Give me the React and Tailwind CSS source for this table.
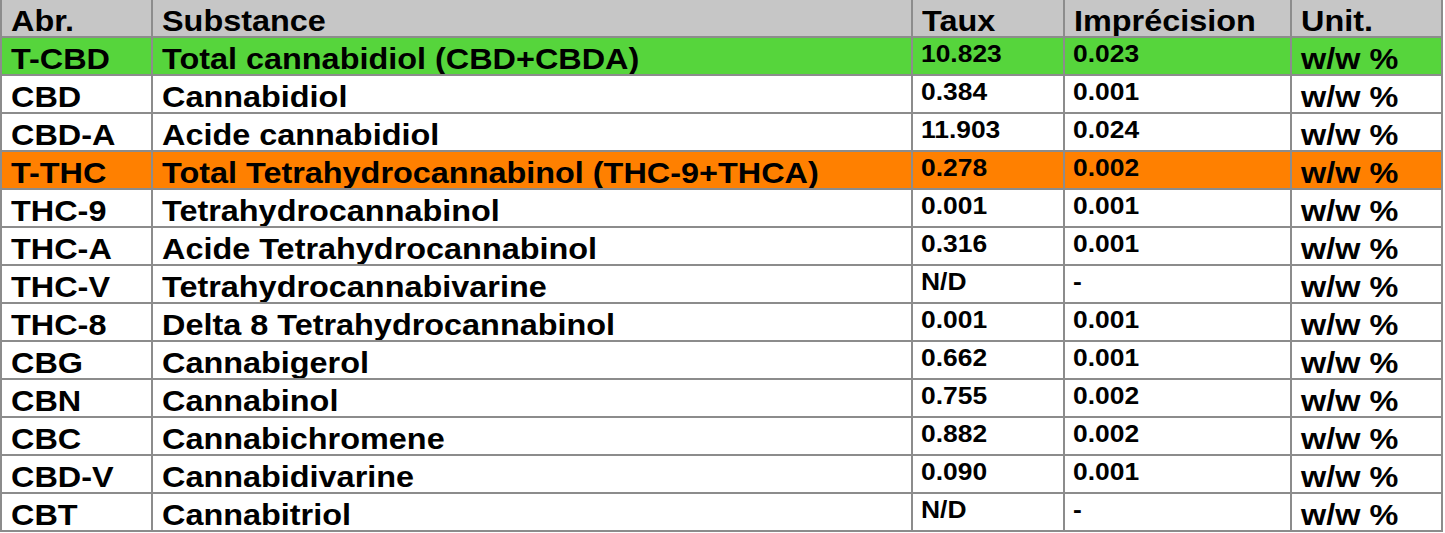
import React from "react";

const rows = [
  { abr: "T-CBD", name: "Total cannabidiol (CBD+CBDA)", taux: "10.823", imp: "0.023", tone: "green" },
  { abr: "CBD", name: "Cannabidiol", taux: "0.384", imp: "0.001" },
  { abr: "CBD-A", name: "Acide cannabidiol", taux: "11.903", imp: "0.024" },
  { abr: "T-THC", name: "Total Tetrahydrocannabinol (THC-9+THCA)", taux: "0.278", imp: "0.002", tone: "orange" },
  { abr: "THC-9", name: "Tetrahydrocannabinol", taux: "0.001", imp: "0.001" },
  { abr: "THC-A", name: "Acide Tetrahydrocannabinol", taux: "0.316", imp: "0.001" },
  { abr: "THC-V", name: "Tetrahydrocannabivarine", taux: "N/D", imp: "-" },
  { abr: "THC-8", name: "Delta 8 Tetrahydrocannabinol", taux: "0.001", imp: "0.001" },
  { abr: "CBG", name: "Cannabigerol", taux: "0.662", imp: "0.001" },
  { abr: "CBN", name: "Cannabinol", taux: "0.755", imp: "0.002" },
  { abr: "CBC", name: "Cannabichromene", taux: "0.882", imp: "0.002" },
  { abr: "CBD-V", name: "Cannabidivarine", taux: "0.090", imp: "0.001" },
  { abr: "CBT", name: "Cannabitriol", taux: "N/D", imp: "-" },
];

const rowBg = {
  header: "bg-[#c6c6c6]",
  green: "bg-[#56d53c]",
  orange: "bg-[#ff8000]",
};

// big text cell (abr, substance, unit, header)
function Big({ children, last }) {
  return (
    <div className={"pl-[9px] pt-[6px] overflow-hidden whitespace-nowrap " + (last ? "" : "border-r-2 border-[#8c8c8c]")}>
      <span className="inline-block origin-left scale-x-[1.08] text-[30px] leading-none">{children}</span>
    </div>
  );
}

// smaller number cell, sits higher in the row
function Num({ children }) {
  return (
    <div className="pl-[8px] pt-[4px] overflow-hidden whitespace-nowrap border-r-2 border-[#8c8c8c]">
      <span className="inline-block origin-left scale-x-110 text-[24px] leading-none">{children}</span>
    </div>
  );
}

function Row({ tone, children }) {
  return (
    <div
      className={
        "grid grid-cols-[151px_760px_152px_227px_1fr] h-[38px] border-b-2 border-[#8c8c8c] " +
        (rowBg[tone] || "bg-white")
      }
    >
      {children}
    </div>
  );
}

export default function App() {
  return (
    <div className="w-[1445px] h-[533px] bg-white text-black font-bold font-['Liberation_Sans',Arial,sans-serif]">
      <div className="w-[1443px] border-l-2 border-r-2 border-t-0 border-[#8c8c8c]">
        <Row tone="header">
          <Big>Abr.</Big>
          <Big>Substance</Big>
          <Big>Taux</Big>
          <Big>Imprécision</Big>
          <Big last>Unit.</Big>
        </Row>
        {rows.map((r) => (
          <Row key={r.abr} tone={r.tone}>
            <Big>{r.abr}</Big>
            <Big>{r.name}</Big>
            <Num>{r.taux}</Num>
            <Num>{r.imp}</Num>
            <Big last>w/w %</Big>
          </Row>
        ))}
      </div>
    </div>
  );
}
